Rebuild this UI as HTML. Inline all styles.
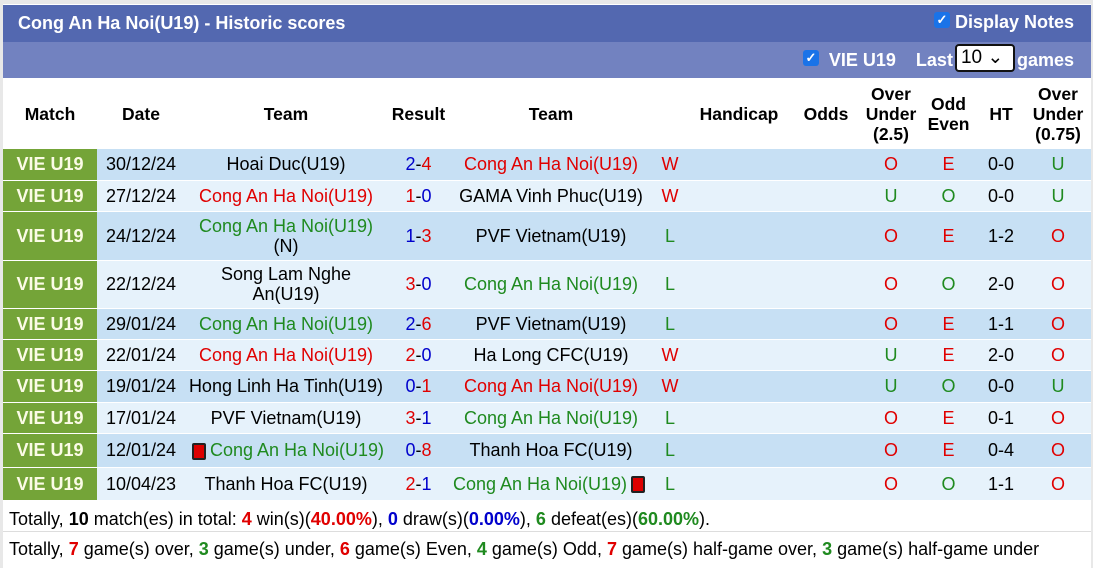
<!DOCTYPE html>
<html><head><meta charset="utf-8"><style>
body{margin:0;background:#fff;font-family:"Liberation Sans",Arial,sans-serif;}
.wrap{position:absolute;left:0;top:0;width:1093px;height:568px;background:#e8e8e8;}
.inner{position:absolute;left:3px;top:4px;width:1088px;height:564px;background:#fff;}
.t1{position:absolute;left:0;top:1px;width:1088px;height:37px;background:#5368b0;color:#fff;font-weight:bold;font-size:18px;}
.t2{position:absolute;left:0;top:38px;width:1088px;height:36px;background:#7282c0;color:#fff;font-weight:bold;font-size:18px;}
.cb{display:inline-block;width:16px;height:16px;background:#1a73e8;border-radius:3px;color:#fff;font-size:13px;line-height:16px;text-align:center;vertical-align:top;}
table{position:absolute;left:0;top:74px;border-collapse:collapse;width:1088px;font-size:18px;line-height:20px;}
td,th{padding:0;text-align:center;}
th{height:71px;font-size:17.5px;line-height:20px;}
tr.a td{background:#c7e0f4;} tr.b td{background:#e6f2fb;}
tr td{border-bottom:1px solid #fff;}
td.m{background:#74a438!important;color:#fbfbe6;font-weight:bold;font-size:18px;}
.r{color:#e00000}.g{color:#1f8a1f}.bl{color:#0000cc}
.flag{display:inline-block;width:14px;height:17px;background:#d00;border:2px solid #222;border-radius:2px;box-sizing:border-box;vertical-align:middle;margin:0 4px;}
.foot{position:absolute;left:6px;font-size:18px;}
</style></head><body><div class="wrap"><div class="inner">
<div class="t1"><span style="position:absolute;left:15px;top:8px">Cong An Ha Noi(U19) - Historic scores</span><span style="position:absolute;right:17px;top:7px"><span class="cb">✓</span> Display Notes</span></div>
<div class="t2"><span style="position:absolute;right:17px;top:8px"><span class="cb">✓</span>&nbsp; VIE U19 &nbsp;&nbsp; Last<span style="display:inline-block;border:2px solid #111;border-radius:4px;background:#fff;color:#000;font-weight:normal;width:60px;height:28px;line-height:24px;margin:-6px 2px 0 2px;vertical-align:middle;text-align:left;padding-left:4px;box-sizing:border-box;font-size:19px">10 ⌄</span>games</span></div>
<table>
<colgroup><col style="width:94px"><col style="width:88px"><col style="width:202px"><col style="width:63px"><col style="width:202px"><col style="width:36px"><col style="width:102px"><col style="width:72px"><col style="width:58px"><col style="width:57px"><col style="width:48px"><col style="width:66px"></colgroup>
<tr><th>Match</th><th>Date</th><th>Team</th><th>Result</th><th>Team</th><th></th><th>Handicap</th><th>Odds</th><th>Over<br>Under<br>(2.5)</th><th>Odd<br>Even</th><th>HT</th><th>Over<br>Under<br>(0.75)</th></tr>
<tr class="a" style="height:31px"><td class="m">VIE U19</td><td>30/12/24</td><td>Hoai Duc(U19)</td><td><span class="bl">2</span>-<span class="r">4</span></td><td class="r">Cong An Ha Noi(U19)</td><td class="r">W</td><td></td><td></td><td class="r">O</td><td class="r">E</td><td>0-0</td><td class="g">U</td></tr>
<tr class="b" style="height:31px"><td class="m">VIE U19</td><td>27/12/24</td><td class="r">Cong An Ha Noi(U19)</td><td><span class="r">1</span>-<span class="bl">0</span></td><td>GAMA Vinh Phuc(U19)</td><td class="r">W</td><td></td><td></td><td class="g">U</td><td class="g">O</td><td>0-0</td><td class="g">U</td></tr>
<tr class="a" style="height:49px"><td class="m">VIE U19</td><td>24/12/24</td><td><span class="g">Cong An Ha Noi(U19)</span><br>(N)</td><td><span class="bl">1</span>-<span class="r">3</span></td><td>PVF Vietnam(U19)</td><td class="g">L</td><td></td><td></td><td class="r">O</td><td class="r">E</td><td>1-2</td><td class="r">O</td></tr>
<tr class="b" style="height:48px"><td class="m">VIE U19</td><td>22/12/24</td><td>Song Lam Nghe<br>An(U19)</td><td><span class="r">3</span>-<span class="bl">0</span></td><td class="g">Cong An Ha Noi(U19)</td><td class="g">L</td><td></td><td></td><td class="r">O</td><td class="g">O</td><td>2-0</td><td class="r">O</td></tr>
<tr class="a" style="height:31px"><td class="m">VIE U19</td><td>29/01/24</td><td class="g">Cong An Ha Noi(U19)</td><td><span class="bl">2</span>-<span class="r">6</span></td><td>PVF Vietnam(U19)</td><td class="g">L</td><td></td><td></td><td class="r">O</td><td class="r">E</td><td>1-1</td><td class="r">O</td></tr>
<tr class="b" style="height:31px"><td class="m">VIE U19</td><td>22/01/24</td><td class="r">Cong An Ha Noi(U19)</td><td><span class="r">2</span>-<span class="bl">0</span></td><td>Ha Long CFC(U19)</td><td class="r">W</td><td></td><td></td><td class="g">U</td><td class="r">E</td><td>2-0</td><td class="r">O</td></tr>
<tr class="a" style="height:32px"><td class="m">VIE U19</td><td>19/01/24</td><td>Hong Linh Ha Tinh(U19)</td><td><span class="bl">0</span>-<span class="r">1</span></td><td class="r">Cong An Ha Noi(U19)</td><td class="r">W</td><td></td><td></td><td class="g">U</td><td class="g">O</td><td>0-0</td><td class="g">U</td></tr>
<tr class="b" style="height:31px"><td class="m">VIE U19</td><td>17/01/24</td><td>PVF Vietnam(U19)</td><td><span class="r">3</span>-<span class="bl">1</span></td><td class="g">Cong An Ha Noi(U19)</td><td class="g">L</td><td></td><td></td><td class="r">O</td><td class="r">E</td><td>0-1</td><td class="r">O</td></tr>
<tr class="a" style="height:34px"><td class="m">VIE U19</td><td>12/01/24</td><td style="white-space:nowrap"><span class="flag"></span><span class="g">Cong An Ha Noi(U19)</span></td><td><span class="bl">0</span>-<span class="r">8</span></td><td>Thanh Hoa FC(U19)</td><td class="g">L</td><td></td><td></td><td class="r">O</td><td class="r">E</td><td>0-4</td><td class="r">O</td></tr>
<tr class="b" style="height:33px"><td class="m">VIE U19</td><td>10/04/23</td><td>Thanh Hoa FC(U19)</td><td><span class="r">2</span>-<span class="bl">1</span></td><td style="white-space:nowrap"><span class="g">Cong An Ha Noi(U19)</span><span class="flag"></span></td><td class="g">L</td><td></td><td></td><td class="r">O</td><td class="g">O</td><td>1-1</td><td class="r">O</td></tr>
</table>
<div class="foot" style="top:505px">Totally, <b>10</b> match(es) in total: <b class="r">4</b> win(s)(<b class="r">40.00%</b>), <b class="bl">0</b> draw(s)(<b class="bl">0.00%</b>), <b class="g">6</b> defeat(es)(<b class="g">60.00%</b>).</div>
<div style="position:absolute;left:0;top:527px;width:1088px;height:1px;background:#ddd"></div>
<div class="foot" style="top:535px">Totally, <b class="r">7</b> game(s) over, <b class="g">3</b> game(s) under, <b class="r">6</b> game(s) Even, <b class="g">4</b> game(s) Odd, <b class="r">7</b> game(s) half-game over, <b class="g">3</b> game(s) half-game under</div>
</div></div></body></html>
